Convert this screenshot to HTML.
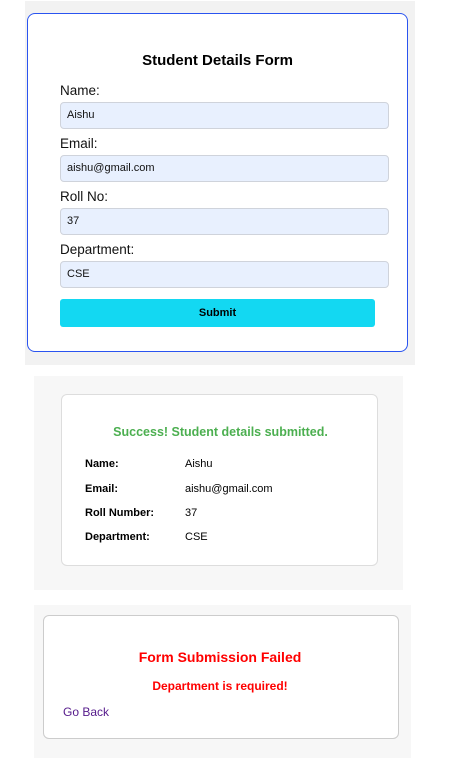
<!DOCTYPE html>
<html><head><style>
body{margin:0;width:458px;height:767px;background:#fff;font-family:"Liberation Sans",Arial,sans-serif;position:relative;overflow:hidden}
.a{position:absolute}
.bg1{left:25px;top:1px;width:390px;height:364px;background:#f2f2f2}
.c1{left:27px;top:13px;width:379px;height:337px;background:#fff;border:1.5px solid #2a54f0;border-radius:8px}
.t{position:absolute;left:0;right:0;text-align:center;font-weight:bold}
.lab{position:absolute;left:60px;font-size:13.5px;color:#111}
.inp{position:absolute;left:60px;width:329px;height:27px;background:#e8f0fe;border:1px solid #cfd3db;border-radius:4px;box-sizing:border-box;font-size:11px;padding-left:6px;line-height:25px;color:#111}
.btn{left:60px;top:299px;width:315px;height:28px;background:#13d8f2;border-radius:3px;text-align:center;line-height:29px;font-size:11px;font-weight:bold}
.bg2{left:34px;top:376px;width:369px;height:214px;background:#f7f7f7}
.c2{left:61px;top:394px;width:315px;height:170px;background:#fff;border:1px solid #ddd;border-radius:6px}
.k{position:absolute;left:85px;font-size:11px;font-weight:bold}
.v{position:absolute;left:185px;font-size:11px}
.bg3{left:34px;top:605px;width:377px;height:153px;background:#f7f7f7}
.c3{left:43px;top:615px;width:354px;height:122px;background:#fff;border:1px solid #ccc;border-radius:6px}
</style></head><body>
<div class="a bg1"></div>
<div class="a c1"></div>
<div class="t" style="top:52px;font-size:15px;left:27px;right:50px">Student Details Form</div>
<div class="lab" style="top:83px">Name:</div>
<div class="inp" style="top:102px">Aishu</div>
<div class="lab" style="top:136px">Email:</div>
<div class="inp" style="top:155px">aishu@gmail.com</div>
<div class="lab" style="top:189px">Roll No:</div>
<div class="inp" style="top:208px">37</div>
<div class="lab" style="top:242px">Department:</div>
<div class="inp" style="top:261px">CSE</div>
<div class="a btn">Submit</div>

<div class="a bg2"></div>
<div class="a c2"></div>
<div class="t" style="top:425px;left:63px;width:315px;font-size:12.5px;color:#4caf50">Success! Student details submitted.</div>
<div class="k" style="top:458px">Name:</div><div class="v" style="top:458px">Aishu</div>
<div class="k" style="top:483px">Email:</div><div class="v" style="top:483px">aishu@gmail.com</div>
<div class="k" style="top:507px">Roll Number:</div><div class="v" style="top:507px">37</div>
<div class="k" style="top:531px">Department:</div><div class="v" style="top:531px">CSE</div>

<div class="a bg3"></div>
<div class="a c3"></div>
<div class="t" style="top:649px;left:43px;width:354px;font-size:14px;color:#f00">Form Submission Failed</div>
<div class="t" style="top:679px;left:43px;width:354px;font-size:12px;color:#f00">Department is required!</div>
<div class="a" style="left:63px;top:705px;font-size:12px;color:#551a8b">Go Back</div>
</body></html>
